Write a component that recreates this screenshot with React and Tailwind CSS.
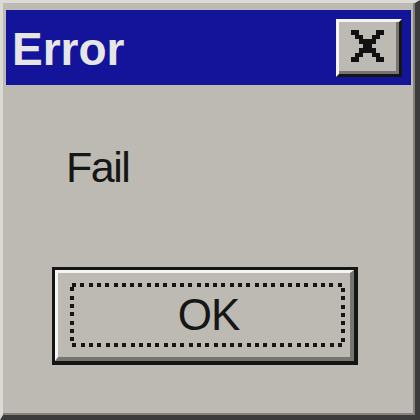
// Classic Win95-style message box, drawn large
const font = { fontFamily: '"Liberation Sans", Arial, sans-serif' };

function CloseGlyph() {
  // 8x7 pixel "X" glyph
  const rows = [
    "XX....XX",
    ".XX..XX.",
    "..XXXX..",
    "...XX...",
    "..XXXX..",
    ".XX..XX.",
    "XX....XX",
  ];
  return (
    <svg width="33" height="32" viewBox="0 0 8 7" preserveAspectRatio="none" shapeRendering="crispEdges">
      {rows.map((r, y) =>
        r.split("").map((c, x) => (c === "X" ? <rect key={`${x}-${y}`} x={x} y={y} width="1" height="1" fill="#111" /> : null))
      )}
    </svg>
  );
}

export default function App() {
  return (
    <div className="w-[420px] h-[420px] bg-[#bdbab4] border-t-[3px] border-l-[3px] border-t-[#dcdad5] border-l-[#dcdad5] border-b-[5px] border-r-[5px] border-b-[#3c3c3c] border-r-[#3c3c3c]" style={font}>
      <div className="h-full flex flex-col border-b-2 border-r-2 border-[#85837e]">
        {/* title bar */}
        <div className="mt-[7px] ml-[3px] mr-[2px] h-[75px] bg-[#14149a] flex items-center justify-between">
          <span className="ml-[6px] mt-[2px] text-[46px] font-bold leading-none text-[#e6e6e6]">Error</span>
          <button className="mr-[9px] w-[66px] h-[58px] bg-[#bdbab4] border-t-[3px] border-l-[3px] border-t-[#f4f4f2] border-l-[#f4f4f2] border-b-[3px] border-r-[3px] border-b-[#151515] border-r-[#151515]">
            <div className="w-full h-full flex items-center justify-center border-b-[3px] border-r-[3px] border-[#77756f]">
              <CloseGlyph />
            </div>
          </button>
        </div>

        {/* message */}
        <p className="mt-[61px] ml-[63px] text-[43px] leading-none tracking-[-1.5px] text-[#161616]">Fail</p>

        {/* OK button */}
        <button className="mt-[78px] ml-[49px] w-[306px] h-[98px] bg-[#bdbab4] border-[3px] border-b-4 border-r-4 border-[#151515]">
          <div className="w-full h-full border-t-[3px] border-l-[3px] border-t-[#f4f4f2] border-l-[#f4f4f2] border-b-4 border-r-4 border-b-[#77756f] border-r-[#77756f] pt-[10px] pl-[12px] pr-[3px] pb-[5px]">
            <div className="relative w-full h-full flex items-center justify-center">
              <svg className="absolute inset-0 w-full h-full" shapeRendering="crispEdges">
                <rect x="2" y="2" width="271" height="60" fill="none" stroke="#151515" strokeWidth="4" strokeDasharray="4 4.3" />
              </svg>
              <span className="mb-[6px] text-[44px] leading-none tracking-[-1px] text-[#161616]">OK</span>
            </div>
          </div>
        </button>
      </div>
    </div>
  );
}
